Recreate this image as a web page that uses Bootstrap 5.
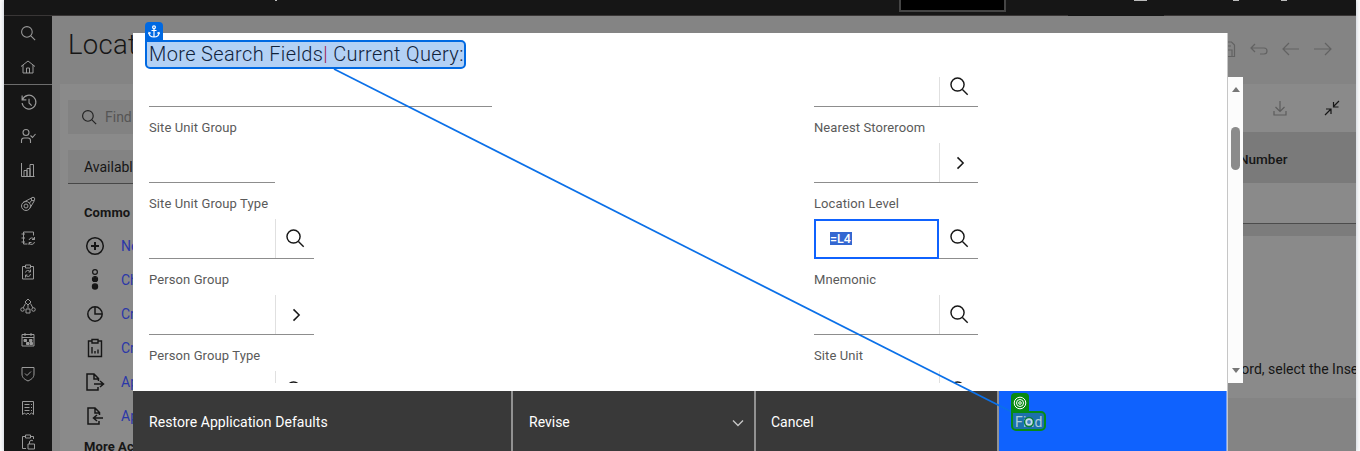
<!DOCTYPE html>
<html lang="en">
<head>
<meta charset="utf-8">
<meta name="viewport" content="width=device-width, initial-scale=1">
<title>Locations</title>
<link rel="stylesheet" href="https://cdn.jsdelivr.net/npm/bootstrap@5.3.0/dist/css/bootstrap.min.css">
<style>
body{width:1360px;height:451px;overflow:hidden;background:#fafafa;color:#161616;font-family:Roboto,"Liberation Sans",sans-serif;font-size:14px;line-height:18px}
svg{display:block;fill:none;stroke:currentColor;flex:none}
.app{margin:0 4px;height:451px;background:#848484;box-shadow:0 0 4px #bcc4d0;white-space:nowrap}
.topbar{height:16px;background:#161616;border-bottom:1px solid #393636;position:relative}
.brandbox{position:absolute;left:895px;top:-20px;width:107px;height:32px;background:#000;border:2px solid #454545}
.topbit{position:absolute;top:0;height:1px;background:#bbb}
.topgap{position:absolute;left:1064px;top:15px;width:96px;height:1px;background:#161616}
.rail{width:48px;background:#161616;color:#9a9a9a}
.rail .cell{height:34px;display:flex;align-items:center;justify-content:center}
.rail .c-top{height:35px}.rail .c-home{height:34px;border-bottom:1px solid #6d6d6d;padding-bottom:2px}
.pagehead{height:68px;color:#626262}
.pagetitle{font-size:27.5px;font-weight:300;letter-spacing:.3px;color:#161616;line-height:32px;margin:13px 0 0 16px;width:65px;overflow:hidden}
.panel{background:#8a8a8a}
.sidecol{width:1160px;padding:16px 8px 0}
.sidecol>div{width:65px;overflow:hidden}
.findbox{height:34px;background:#828282;color:#555;padding-left:13px;gap:7px}
.avail{height:34px;margin-top:16px;background:#838383;border-bottom:1px solid #474747;padding-left:16px}
.sect{font-weight:700;padding-left:16px;font-size:13px;letter-spacing:.1px}
.act{height:34px;padding-left:16px;gap:15px;color:#161616}
.act span{color:#2a37a8}
.rightcol{width:136px;overflow:hidden}
.tools{height:48px;position:relative}
.thead-bar{height:51px;background:#7a7a7a;font-weight:500;font-size:13.5px;line-height:55px}
.trow{height:41px;border-bottom:1px solid #4c4c4c}
.tgap{height:12px;background:#7c7c7c}
.tmsg{height:162px;padding-top:124px}
.dlg{position:absolute;left:133px;top:33px;width:1095px;height:418px;background:#fff;border-right:1px solid #c6c6c6;white-space:nowrap}
.dlg-form{height:306px;overflow:hidden;margin-top:44px;padding-left:16px}
.dlg-inner{margin-top:-46px}
.colA{width:665px}
.flabel{height:36px;padding-top:12px;font-size:13px;font-weight:400;color:#5a5a5a;letter-spacing:.1px}
.fline{height:40px;border-bottom:1px solid #8d8d8d}
.fbtn{width:39px;border-left:1px solid #e0e0e0;color:#161616;padding-left:1px}
.w-long{width:343px}.w-short{width:126px}.w-btn{width:165px}.w-btn2{width:164px}
.focusin{width:125px;height:40px;border:2px solid #0f62fe;padding:8px 0 0 14px}
.sel{background:#3367d1;color:#fff;font-size:12.5px;line-height:14px;height:13px;display:inline-block;width:22px;font-weight:500}
.dlg-foot{height:60px;margin-top:8px;color:#fff;background:#393939}
.fb{height:60px;padding:0 10px 0 16px;line-height:63px;border-right:2px solid #929292}
.fb-find{background:#0f62fe;flex:1;border-right:1px solid #6f9dfb}
.sb{position:absolute;left:1228px;top:77px;width:15px;height:306px;background:#fcfcfc;padding:10px 0 10px}
.sb i{display:block;width:0;height:0;border:4px solid transparent}
.sb .up{border-top:0;border-bottom:5px solid #777}.sb .dn{border-bottom:0;border-top:5px solid #777;margin-top:auto}
.thumb{width:9px;height:43px;border-radius:5px;background:#8b8b8b;margin-top:35px}
.anch{position:absolute;left:145px;top:40px;width:321px;height:29px;border:2px solid #0069e2;border-radius:0 5px 5px 5px;background:#b3d1f5;font-size:20px;font-weight:300;line-height:25px;padding-left:2px;color:#10233c;letter-spacing:.36px;white-space:nowrap}
.anch b{font-weight:300;color:#a02050}
.tab-a{position:absolute;left:145px;top:22px;width:18px;height:19px;border-radius:4px 4px 0 0;background:#0069e2;color:#fff;display:flex;align-items:center;justify-content:center}
.lineover{position:absolute;left:0;top:0;pointer-events:none}
.tgt{position:absolute;left:1011px;top:411px;width:35px;height:20px;border:2px solid #078a14;border-radius:0 5px 5px 5px;background:#1c70ac;color:#a9cdd8;line-height:18px;padding-left:2px;letter-spacing:.2px}
.tab-t{position:absolute;left:1011px;top:393px;width:18px;height:19px;border-radius:4px 4px 0 0;background:#078a14;color:#fff;display:flex;align-items:center;justify-content:center}
</style>
</head>
<body>
<svg width="0" height="0" class="position-absolute">
<defs>
<symbol id="mag" viewBox="0 0 32 32"><circle cx="13" cy="13" r="10"/><path d="M20.5 20.5 28.5 28.5"/></symbol>
<symbol id="chev" viewBox="0 0 32 32"><path d="M12 7l9 9-9 9"/></symbol>
<symbol id="home" viewBox="0 0 32 32"><path d="M2 15 16 4l14 11M6 12v16h20V12M13 28V18h6v10"/></symbol>
<symbol id="hist" viewBox="0 0 32 32"><path d="M5 10a13 13 0 1 1-1 7M4 3v8h8M17 9v8l5 5"/></symbol>
<symbol id="user" viewBox="0 0 32 32"><circle cx="12" cy="9" r="6"/><path d="M3 30v-5a5 5 0 0 1 5-5h8a5 5 0 0 1 5 5v5M21 15l4 4 6-7"/></symbol>
<symbol id="chart" viewBox="0 0 32 32"><path d="M3 2v27h26M8 29V17h6v12M14 29V13h6v16M20 29V5h7v24"/></symbol>
<symbol id="meas" viewBox="0 0 32 32"><circle cx="12" cy="20" r="9"/><circle cx="12" cy="20" r="4"/><path d="M6 13 23 4M20 24 29 9M19 14l5-6"/><circle cx="26" cy="6" r="3.5"/></symbol>
<symbol id="note" viewBox="0 0 32 32"><path d="M27 11V4H7v24h8M3 8h7M3 16h7M3 24h7M18 20a6 6 0 0 1 11-1M29 14v5h-5M29 24a6 6 0 0 1-11 2M18 30v-5h5"/></symbol>
<symbol id="clipr" viewBox="0 0 32 32"><path d="M11 5H5v25h22V5h-6M11 2h10v6H11zM11 17a5 5 0 0 1 9-2M21 11v5h-4M21 20a5 5 0 0 1-9 3M11 27v-5h4"/></symbol>
<symbol id="tree" viewBox="0 0 32 32"><path d="M16 2l6 6-6 6-6-6zM16 14v7M11 11l-5 9M21 11l5 9M12 22h8v8h-8z"/><circle cx="5" cy="23" r="3.5"/><circle cx="27" cy="23" r="3.5"/></symbol>
<symbol id="cal" viewBox="0 0 32 32"><path d="M4 5h24v23H4zM4 11h24M10 2v6M22 2v6"/><path fill="currentColor" d="M8 15h5v4H8zM19 15h5v4h-5zM13 21h5v4h-5zM20 21h5v4h-5z"/></symbol>
<symbol id="shield" viewBox="0 0 32 32"><path d="M4 3h24v13c0 8-6 11-12 14C10 27 4 24 4 16zM10 15l4 4 8-8"/></symbol>
<symbol id="receipt" viewBox="0 0 32 32"><path d="M5 29V3h22v26l-4-3-4 3-3-3-4 3-3-3zM9 9h10M22 9h2M9 15h10M22 15h2M9 21h10M22 21h2"/></symbol>
<symbol id="lock" viewBox="0 0 32 32"><path d="M11 5H5v24h7M21 5h6v5M11 2h10v6H11zM16 20h13v10H16zM19 20v-4a4 4 0 0 1 7-2"/></symbol>
</defs></svg>

<div class="app d-flex flex-column overflow-hidden">
  <header class="topbar flex-shrink-0">
    <div class="brandbox"></div>
    <div class="topbit" style="left:271px;width:2px"></div><div class="topbit" style="left:1130px;width:13px"></div>
    <div class="topbit" style="left:1229px;width:6px"></div><div class="topbit" style="left:1277px;width:6px"></div>
    <div class="topgap"></div>
  </header>
  <div class="d-flex flex-grow-1">
    <nav class="rail flex-shrink-0">
      <div class="cell c-top"><svg width="17" height="17" stroke-width="2"><use href="#mag"/></svg></div>
      <div class="cell c-home"><svg width="16" height="16" stroke-width="2"><use href="#home"/></svg></div>
      <div class="cell"><svg width="17" height="17" stroke-width="2.2"><use href="#hist"/></svg></div>
      <div class="cell"><svg width="16" height="16" stroke-width="2.2"><use href="#user"/></svg></div>
      <div class="cell"><svg width="16" height="16" stroke-width="2"><use href="#chart"/></svg></div>
      <div class="cell"><svg width="16" height="16" stroke-width="2"><use href="#meas"/></svg></div>
      <div class="cell"><svg width="16" height="16" stroke-width="2"><use href="#note"/></svg></div>
      <div class="cell"><svg width="16" height="16" stroke-width="2"><use href="#clipr"/></svg></div>
      <div class="cell"><svg width="16" height="16" stroke-width="2"><use href="#tree"/></svg></div>
      <div class="cell"><svg width="16" height="16" stroke-width="2"><use href="#cal"/></svg></div>
      <div class="cell"><svg width="16" height="16" stroke-width="2"><use href="#shield"/></svg></div>
      <div class="cell"><svg width="16" height="16" stroke-width="2"><use href="#receipt"/></svg></div>
      <div class="cell"><svg width="16" height="16" stroke-width="2"><use href="#lock"/></svg></div>
    </nav>
    <main class="flex-grow-1">
      <div class="pagehead d-flex justify-content-between">
        <h1 class="pagetitle">Locat</h1>
        <svg width="120" height="68" viewBox="1236 16 120 68" class="overflow-visible" stroke-width="1.2"><path d="M1224 42h7.500l3 3v11.500h-10.500zM1227 56v-6h5v6M1227 42v4h4M1255 44l-4 4 4 4M1251 48h13a3 3 0 0 1 0 6h-4M1289 43l-6 6 6 6M1283 49h16M1325 43l6 6-6 6M1331 49h-17"/></svg>
      </div>
      <div class="d-flex">
        <div class="ms-2 panel sidecol">
          <div class="findbox d-flex align-items-center"><svg width="17" height="17" stroke-width="2.2" color="#222"><use href="#mag"/></svg>Find</div>
          <div class="avail d-flex align-items-center">Availabl</div>
          <div class="sect mt-3 pt-1">Commo</div>
          <div class="act d-flex align-items-center" style="margin-top:7px"><svg width="22" height="22" viewBox="0 0 22 22" stroke-width="1.5"><circle cx="11" cy="11" r="8.3"/><path stroke-width="2" d="M11 7v8M7 11h8"/></svg><span>Ne</span></div>
          <div class="act d-flex align-items-center"><svg width="22" height="22" viewBox="0 0 22 22" stroke-width="1.2"><circle cx="11" cy="3" r="2.4"/><circle cx="11" cy="10" r="2.5"/><path fill="currentColor" d="M8.500 10a2.500 2.500 0 0 0 5 0l-2.500-2z"/><circle cx="11" cy="17.500" r="2.600" fill="currentColor"/></svg><span>Ch</span></div>
          <div class="act d-flex align-items-center"><svg width="22" height="22" viewBox="0 0 22 22" stroke-width="1.5"><circle cx="11" cy="11" r="7.2"/><path d="M11 4v7h7"/></svg><span>Cr</span></div>
          <div class="act d-flex align-items-center"><svg width="22" height="22" viewBox="0 0 22 22" stroke-width="1.4"><path d="M8 4H4.500v15.500h13V4H14M8 2.500h6v3.500H8zM8 10v6.500M11 14v2.500M14 12.500v4"/></svg><span>Cr</span></div>
          <div class="act d-flex align-items-center"><svg width="22" height="22" viewBox="0 0 22 22" stroke-width="1.5"><path d="M14 16v3H3V3h7l4.500 4.500V10M10 3v5h4.500M10 13h9M16 10l3.500 3-3.500 3"/></svg><span>Ap</span></div>
          <div class="act d-flex align-items-center"><svg width="22" height="22" viewBox="0 0 22 22" stroke-width="1.500"><path d="M15 16v3H4V3h7l4.500 4.500V10M11 3v5h4.500M19 13h-9M13 10l-3.500 3 3.500 3"/></svg><span>Ap</span></div>
          <div class="sect" style="padding-top:5px">More Ac</div>
        </div>
        <div class="rightcol panel">
          <div class="tools"><svg width="136" height="48" viewBox="1220 84 136 48" stroke-width="1.2"><path stroke="#5d5d5d" d="M1280 101v10M1275.500 107l4.500 4.500 4.500-4.500M1274 111v4h12v-4"/><path stroke="#161616" d="M1339 101l-5.500 5.500M1333.500 102v5h5M1325 115l5.500-5.500M1326 109h5v5"/></svg></div>
          <div class="thead-bar"><span style="margin-left:19px">Number</span></div>
          <div class="trow"></div><div class="tgap"></div>
          <div class="tmsg"><span style="margin-left:14px">cord, select the Inse</span></div>
          <div style="height:53px;background:#848484"></div>
        </div>
      </div>
    </main>
  </div>
</div>

<section class="dlg">
  <div class="dlg-form"><div class="dlg-inner d-flex">
    <div class="colA">
      <div class="flabel"></div><div class="fline w-long"></div>
      <div class="flabel">Site Unit Group</div><div class="fline w-short"></div>
      <div class="flabel">Site Unit Group Type</div><div class="fline w-btn d-flex justify-content-end"><div class="fbtn d-flex align-items-center justify-content-center"><svg width="21" height="21" stroke-width="2.2"><use href="#mag"/></svg></div></div>
      <div class="flabel">Person Group</div><div class="fline w-btn d-flex justify-content-end"><div class="fbtn d-flex align-items-center justify-content-center"><svg width="20" height="20" stroke-width="2.4"><use href="#chev"/></svg></div></div>
      <div class="flabel">Person Group Type</div><div class="fline w-btn d-flex justify-content-end"><div class="fbtn d-flex align-items-center justify-content-center"><svg width="21" height="21" stroke-width="2.2"><use href="#mag"/></svg></div></div>
    </div>
    <div>
      <div class="flabel"></div><div class="fline w-btn2 d-flex justify-content-end"><div class="fbtn d-flex align-items-center justify-content-center"><svg width="21" height="21" stroke-width="2.2"><use href="#mag"/></svg></div></div>
      <div class="flabel">Nearest Storeroom</div><div class="fline w-btn2 d-flex justify-content-end"><div class="fbtn d-flex align-items-center justify-content-center"><svg width="20" height="20" stroke-width="2.4"><use href="#chev"/></svg></div></div>
      <div class="flabel">Location Level</div><div class="fline w-btn2 d-flex"><div class="focusin"><span class="sel">=L4</span></div><div class="fbtn d-flex align-items-center justify-content-center border-0"><svg width="21" height="21" stroke-width="2.2"><use href="#mag"/></svg></div></div>
      <div class="flabel">Mnemonic</div><div class="fline w-btn2 d-flex justify-content-end"><div class="fbtn d-flex align-items-center justify-content-center"><svg width="21" height="21" stroke-width="2.2"><use href="#mag"/></svg></div></div>
      <div class="flabel">Site Unit</div><div class="fline w-btn2 d-flex justify-content-end"><div class="fbtn d-flex align-items-center justify-content-center"><svg width="21" height="21" stroke-width="2.2"><use href="#mag"/></svg></div></div>
    </div>
  </div></div>
  <div class="dlg-foot d-flex">
    <div class="fb" style="width:380px;letter-spacing:.06px">Restore Application Defaults</div>
    <div class="fb d-flex justify-content-between" style="width:243px">Revise<svg class="mt-4 position-relative" style="top:4px" width="12" height="8" viewBox="0 0 12 8" stroke-width="1.400" color="#c6c6c6"><path d="M1 1.500l5 5 5-5"/></svg></div>
    <div class="fb" style="width:243px;padding-left:15px">Cancel</div>
    <div class="fb fb-find"></div>
  </div>
</section>
<div class="sb d-flex flex-column align-items-center"><i class="up"></i><div class="thumb"></div><i class="dn"></i></div>

<svg class="lineover" width="1360" height="451"><path stroke="#0b70e8" stroke-width="1.700" d="M334 69 1012 412"/></svg>
<div class="tab-a"><svg width="12" height="13" viewBox="0 0 12 13" stroke-width="1.200"><circle cx="6" cy="2.200" r="1.400"/><path d="M6 3.600V12M3.500 5.500h5M1 7.500c0 3 2 4.500 5 4.500s5-1.500 5-4.500M.5 9 1 7.500 2.800 8.300M11.500 9 11 7.500 9.200 8.300"/></svg></div>
<div class="anch">More Search Fields<b>|</b> Current Query:</div>
<div class="tab-t"><svg width="14" height="14" viewBox="0 0 14 14" stroke-width="1"><circle cx="7" cy="7" r="5.800"/><circle cx="7" cy="7" r="3.500"/><circle cx="7" cy="7" r="1.300"/></svg></div>
<div class="tgt">Find</div>
<svg class="lineover" width="1360" height="451"><circle cx="1029" cy="422" r="5.200" fill="#0a7d3c" stroke="none"/><circle cx="1029" cy="422" r="2.800" fill="#3d7fc0" stroke="#c4dce8" stroke-width="1.800"/></svg>
<script src="https://cdn.jsdelivr.net/npm/bootstrap@5.3.0/dist/js/bootstrap.bundle.min.js"></script>
</body>
</html>
